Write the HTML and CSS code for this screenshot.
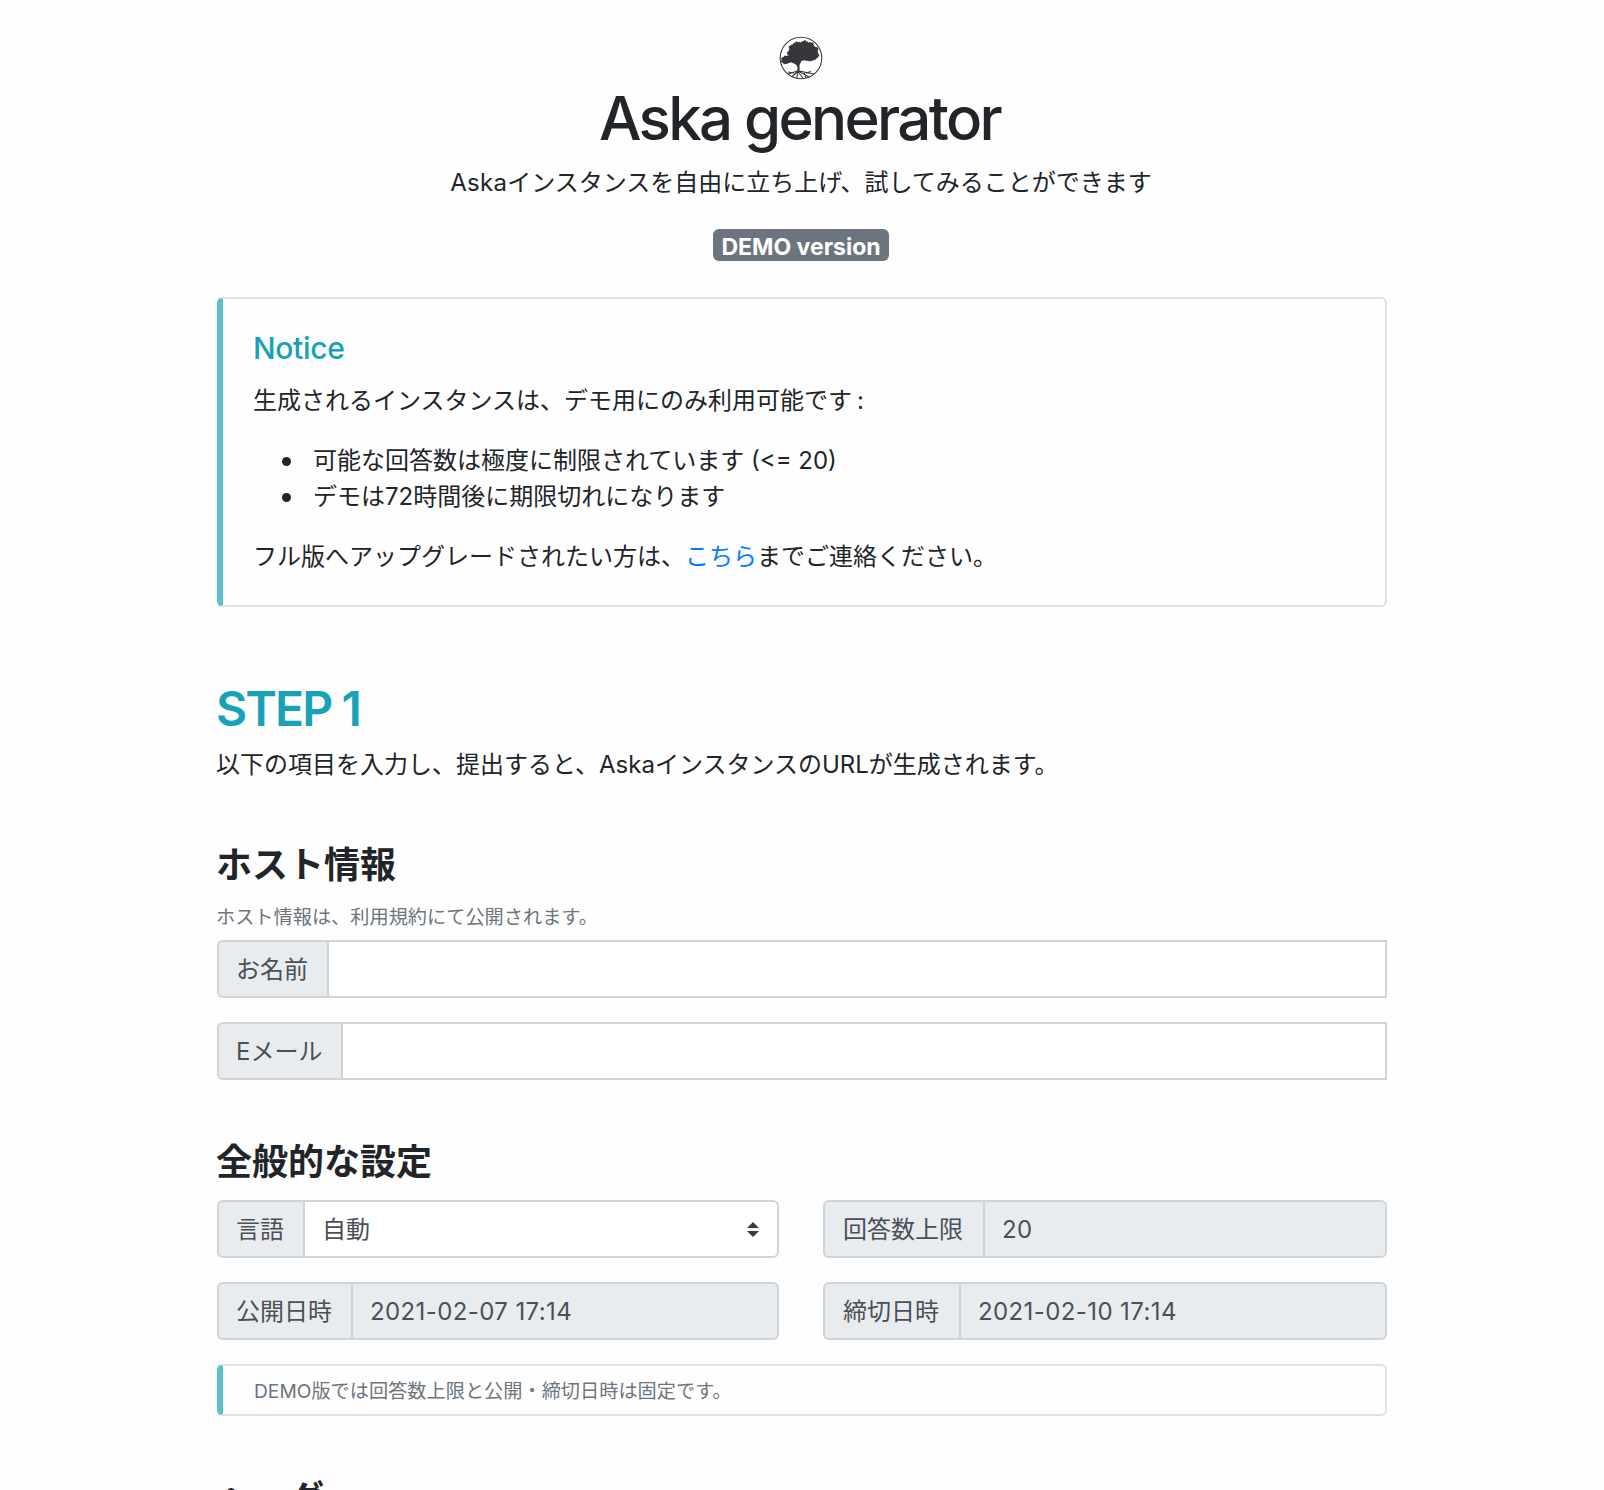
FILE: index.html
```
<!DOCTYPE html>
<html lang="ja">
<head>
<meta charset="utf-8">
<title>Aska generator</title>
<link rel="stylesheet" href="styles.css">
</head>
<body>
<main class="container">
  <header class="hero">
    <svg class="logo" viewBox="0 0 44 44" aria-hidden="true">
      <circle cx="22" cy="22" r="20.8" fill="#fff" stroke="#3a3c3e" stroke-width="1.1"/>
      <path d="M3 22 L2.5 26 L6 28 L12 26 L16 27.5 L20 25 L25 24 L31 25 L36 23.5 L40 20 L38.5 16 L39 12 L35 10.5 L34 7 L29 6.5 L26 4.5 L22 6.5 L17 6 L13 9 L10 10.5 L10.5 14 L8 17 L10 20 L6 20 Z" fill="#35373a" stroke="#35373a" stroke-width="1" stroke-dasharray="2 1"/>
      <path d="M10 25 Q17 27 18.5 31 Q19 34 17 37 L20 37 Q21 33 20.5 29 L23 24 Z" fill="#35373a"/>
      <path d="M18.5 35 L9 38 M18 36 L13 40.5 M18.5 36 L18 42.5 M19 36 L24 42 M19 35 L30 41 M20 35 L35 38 M25 37 L27 42 M15 37 L9 36 M27 37 L32 35.5" fill="none" stroke="#35373a" stroke-width="1.1"/>
    </svg>
    <h1 class="title">Aska generator</h1>
    <p class="lead"><span class="latin">Aska</span>インスタンスを自由に立ち上げ、試してみることができます</p>
    <span class="badge">DEMO version</span>
  </header>

  <section class="card notice">
    <h5 class="notice-title">Notice</h5>
    <p>生成されるインスタンスは、デモ用にのみ利用可能です<span class="colon">:</span></p>
    <ul class="notice-list">
      <li>可能な回答数は極度に制限されています (&lt;= 20)</li>
      <li>デモは72時間後に期限切れになります</li>
    </ul>
    <p>フル版へアップグレードされたい方は、<a class="link" href="#">こちら</a>までご連絡ください。</p>
  </section>

  <h2 class="step">STEP 1</h2>
  <p class="step-text">以下の項目を入力し、提出すると、AskaインスタンスのURLが生成されます。</p>

  <h4 class="section-title host">ホスト情報</h4>
  <p class="help">ホスト情報は、利用規約にて公開されます。</p>
  <div class="stack">
    <div class="group square"><span class="addon name">お名前</span><span class="control"></span></div>
    <div class="group square"><span class="addon mail">Eメール</span><span class="control"></span></div>
  </div>

  <h4 class="section-title general">全般的な設定</h4>
  <div class="grid">
    <div class="group"><span class="addon lang">言語</span><span class="control select">自動
      <svg class="caret" viewBox="0 0 12 15" aria-hidden="true"><path d="M6 0 L12 6 H0 Z M6 15 L0 9 H12 Z" fill="#343a40"/></svg></span></div>
    <div class="group"><span class="addon limit">回答数上限</span><span class="control disabled">20</span></div>
    <div class="group"><span class="addon opens">公開日時</span><span class="control disabled">2021-02-07 17:14</span></div>
    <div class="group"><span class="addon closes">締切日時</span><span class="control disabled">2021-02-10 17:14</span></div>
  </div>
  <div class="card note">DEMO版では回答数上限と公開・締切日時は固定です。</div>

  <h4 class="section-title header-title">ヘッダー</h4>
</main>
</body>
</html>
```
FILE: styles.css
```
* { box-sizing: border-box; }
html { overflow: hidden; }
body {
  margin: 0;
  height: 1490px;
  overflow: hidden;
  background: #fefefe;
  color: #212529;
  font: 400 24px/36px Inter, "Noto Sans CJK JP", sans-serif;
}
h1, h2, h4, h5, p, ul { margin: 0; font-weight: 500; }
p, ul { font-weight: 400; }

.container { width: 1170px; margin-left: 217px; padding-top: 36px; }
.hero { display: flex; flex-direction: column; align-items: center; padding-right: 2px; }
.logo { width: 44px; height: 44px; }
.title {
  margin-top: 2px;
  padding-right: 3px;
  font-size: 60px;
  font-weight: 530;
  letter-spacing: -2.65px;
  line-height: 72px;
}
.lead { margin-top: 11px; }
.latin { letter-spacing: 0.3px; }
.badge {
  height: 32px;
  margin-top: 28px;
  padding: 0 8px;
  border-radius: 6px;
  background: #6c757d;
  color: #fff;
  font-size: 23px;
  font-weight: 700;
  line-height: 36px;
}

.card {
  border: 2px solid #dfe1e3;
  border-left: 6px solid #5bc0ce;
  border-radius: 6px;
}
.notice { margin-top: 36px; padding: 31px 30px 30px; }
.notice-title {
  margin-bottom: 17px;
  color: #17a2b8;
  font-size: 30px;
  letter-spacing: -0.35px;
  line-height: 36px;
}
.colon { margin-left: 5px; }
.notice-list { margin: 24px 0; padding-left: 60px; list-style: none; }
.notice-list li::before {
  content: "";
  display: inline-block;
  width: 9px;
  height: 9px;
  margin: 0 22px 0 -31px;
  border-radius: 50%;
  background: #212529;
  vertical-align: 3px;
}
.link { color: #007bff; text-decoration: none; }

.step {
  margin-top: 73px;
  color: #17a2b8;
  font-size: 48px;
  font-weight: 560;
  letter-spacing: -1.9px;
  line-height: 58px;
  text-indent: -1px;
}
.step-text { margin-top: 9px; text-indent: -1px; }

.section-title { font-size: 36px; font-weight: 700; line-height: 43px; text-indent: -1px; }
.host { margin-top: 61px; }
.help { margin-top: 16px; color: #6c757d; font-size: 19.2px; line-height: 29px; text-indent: -1px; }
.stack { display: grid; gap: 24px; margin-top: 8px; }

.group { display: flex; height: 58px; }
.addon, .control { border: 2px solid #ced4da; line-height: 55px; white-space: nowrap; }
.addon {
  flex: none;
  padding-left: 17px;
  border-right-width: 0;
  border-radius: 6px 0 0 6px;
  background: #e9ecef;
  color: #495057;
}
.control {
  flex: 1;
  padding-left: 17px;
  border-radius: 0 6px 6px 0;
  background: #fff;
  color: #495057;
}
.square .control { border-radius: 0; }
.disabled { background: #e9ecef; letter-spacing: 0.4px; }
.name { width: 110px; }
.mail { width: 124px; }
.lang { width: 86px; }
.limit { width: 160px; padding-left: 18px; }
.opens { width: 134px; }
.closes { width: 136px; padding-left: 18px; }
.select {
  display: flex;
  align-items: center;
  justify-content: space-between;
  padding-right: 18px;
}
.caret { width: 12px; height: 15px; }

.general { margin-top: 61px; }
.grid { display: grid; grid-template-columns: 562px 564px; gap: 24px 44px; margin-top: 16px; }
.note { height: 52px; margin-top: 24px; padding-left: 31px; color: #6c757d; font-size: 19.2px; line-height: 50px; }
.header-title { margin-top: 62px; }
```
